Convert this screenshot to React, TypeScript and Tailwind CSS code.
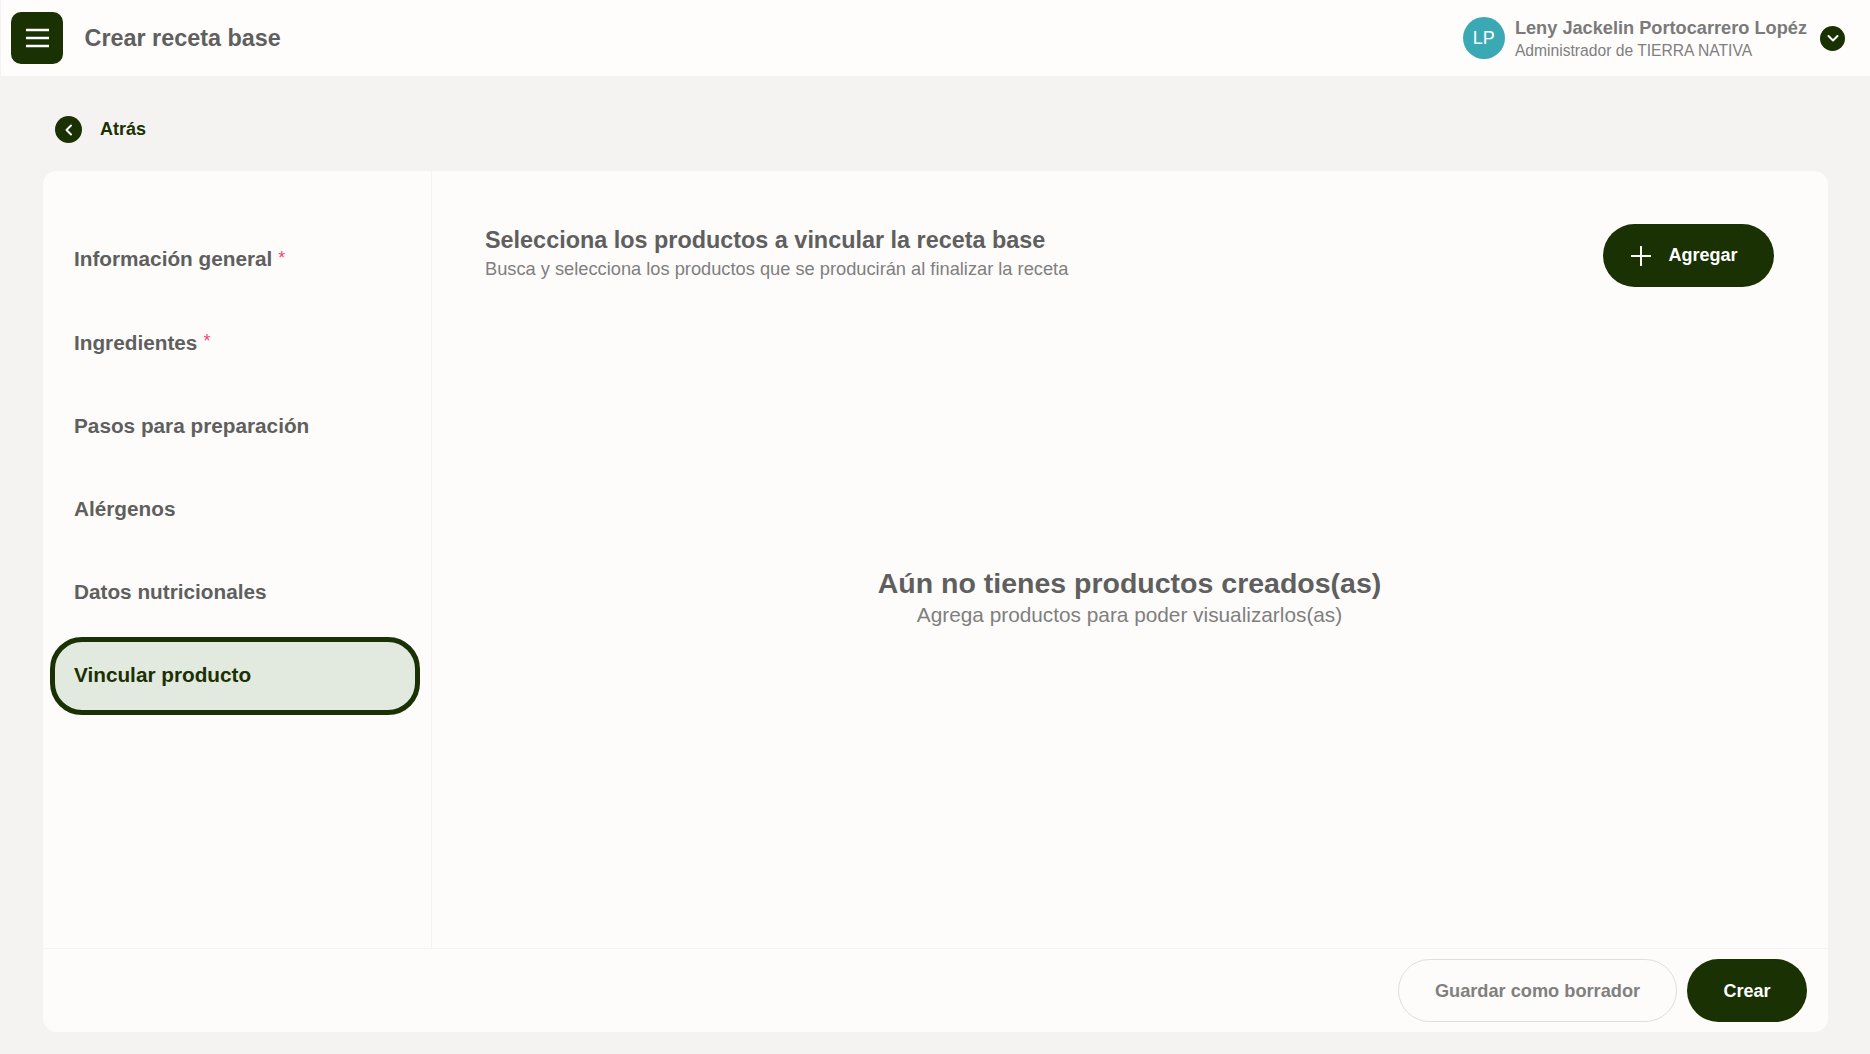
function Chevron({ d }: { d: string }) {
  return (
    <svg width="14" height="14" viewBox="0 0 14 14" fill="none" stroke="#fff" strokeWidth="2" strokeLinecap="round" strokeLinejoin="round">
      <path d={d} />
    </svg>
  );
}

function NavItem({ label, req, active }: { label: string; req?: boolean; active?: boolean }) {
  return (
    <div
      className={
        active
          ? "h-[78px] w-[370px] mt-px pb-[2px] flex items-center pl-[19px] rounded-[32px] border-[5px] border-[#1a3104] bg-[#e2e9df] text-[#1a3104] text-[20.75px] font-bold"
          : "h-[78px] w-[370px] flex items-center pl-[24px] text-[#5f5f5f] text-[20.75px] font-bold"
      }
    >
      <span>{label}</span>
      {req && <span className="ml-[6px] text-[#ec4a7c] font-normal text-[18px] -mt-px">*</span>}
    </div>
  );
}

export default function App() {
  return (
    <div className="w-[1870px] h-[1054px] bg-[#f4f3f2] flex flex-col overflow-hidden font-['Liberation_Sans',sans-serif]">
      <header className="h-[76px] shrink-0 ml-px bg-[#fefdfc] flex items-center pl-[10px] pr-[25px]">
        <button className="w-[52px] h-[52px] rounded-[10px] bg-[#1a3104] flex items-center justify-center pl-[2px]">
          <svg width="24" height="20" viewBox="0 0 24 20" fill="none" stroke="#fff" strokeWidth="2.4">
            <path d="M0 2h23M0 10h23M0 18h23" />
          </svg>
        </button>
        <h1 className="ml-[21.5px] pt-[2px] text-[23.4px] font-bold text-[#5f5f5f]">Crear receta base</h1>
        <div className="ml-auto flex items-center">
          <div className="w-[42px] h-[42px] rounded-full bg-[#3ba9b3] flex items-center justify-center text-white text-[18px]">LP</div>
          <div className="ml-[10px] flex flex-col">
            <span className="text-[18.2px] leading-[24px] font-bold text-[#7a7a7a]">Leny Jackelin Portocarrero Lopéz</span>
            <span className="text-[15.65px] leading-[21px] text-[#7f7f7f]">Administrador de TIERRA NATIVA</span>
          </div>
          <div className="ml-[13px] w-[25px] h-[25px] rounded-full bg-[#1a3104] flex items-center justify-center">
            <Chevron d="M2.5 5l4.5 4.5L11.5 5" />
          </div>
        </div>
      </header>

      <div className="h-[95px] shrink-0 flex items-center pl-[55px] pt-[12px]">
        <div className="w-[27px] h-[27px] rounded-full bg-[#1a3104] flex items-center justify-center">
          <Chevron d="M9 2.5L4.5 7 9 11.5" />
        </div>
        <span className="ml-[18px] text-[18px] font-bold text-[#1a3104]">Atrás</span>
      </div>

      <main className="mx-[43px] w-[1785px] h-[861px] bg-[#fdfcfa] rounded-[14px] flex flex-col">
        <div className="flex-1 flex min-h-0">
          <aside className="w-[389px] shrink-0 border-r border-[#f4f3f1] pl-[7px] pt-[49px] flex flex-col gap-[5.2px]">
            <NavItem label="Información general" req />
            <NavItem label="Ingredientes" req />
            <NavItem label="Pasos para preparación" />
            <NavItem label="Alérgenos" />
            <NavItem label="Datos nutricionales" />
            <NavItem label="Vincular producto" active />
          </aside>
          <section className="flex-1 flex flex-col pl-[53px] pr-[54px] pt-[53px]">
            <div className="flex items-start justify-between">
              <div className="pt-[2px]">
                <h2 className="text-[23.4px] leading-[28px] font-bold text-[#5f5f5f]">Selecciona los productos a vincular la receta base</h2>
                <p className="text-[18.26px] leading-[24px] text-[#7f7f7f] mt-[3px]">Busca y selecciona los productos que se producirán al finalizar la receta</p>
              </div>
              <button className="w-[171px] h-[63px] rounded-full bg-[#1a3104] flex items-center justify-center gap-[17px] text-white text-[18px] font-bold pr-[8px]">
                <svg width="20" height="20" viewBox="0 0 20 20" fill="none" stroke="#fff" strokeWidth="2">
                  <path d="M10 0v20M0 10h20" />
                </svg>
                Agregar
              </button>
            </div>
            <div className="flex-1 flex flex-col items-center justify-center pb-[42px]">
              <h3 className="text-[28.5px] leading-[36px] font-bold text-[#5f5f5f]">Aún no tienes productos creados(as)</h3>
              <p className="text-[20.8px] leading-[28px] text-[#7f7f7f]">Agrega productos para poder visualizarlos(as)</p>
            </div>
          </section>
        </div>
        <footer className="h-[84px] shrink-0 border-t border-[#f4f3f1] flex items-center justify-end gap-[10px] pr-[21px]">
          <button className="w-[279px] h-[63px] rounded-full border border-[#dededc] text-[18.2px] font-bold text-[#808080] pt-[2px]">Guardar como borrador</button>
          <button className="w-[120px] h-[63px] rounded-full bg-[#1a3104] text-white text-[18px] font-bold pt-px">Crear</button>
        </footer>
      </main>
    </div>
  );
}
